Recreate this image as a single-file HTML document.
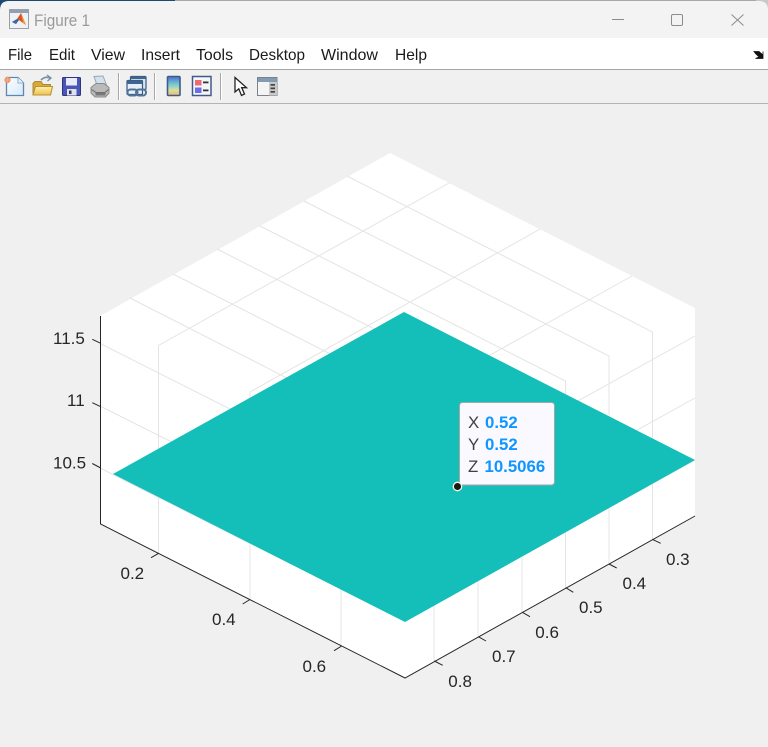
<!DOCTYPE html>
<html>
<head>
<meta charset="utf-8">
<title>Figure 1</title>
<style>
html,body{margin:0;padding:0;background:#f0f0f0;width:768px;height:747px;overflow:hidden}
svg{display:block;font-family:"Liberation Sans",Arial,sans-serif;filter:blur(.3px)}
</style>
</head>
<body>
<svg width="768" height="747" viewBox="0 0 768 747" xmlns="http://www.w3.org/2000/svg">
<defs>
<linearGradient id="cb" x1="0" y1="0" x2="0" y2="1"><stop offset="0" stop-color="#4f6fd0"/><stop offset=".4" stop-color="#74c8d4"/><stop offset=".72" stop-color="#d4e2a0"/><stop offset="1" stop-color="#f7b26c"/></linearGradient>
<linearGradient id="fold" x1="0" y1="0" x2="0" y2="1"><stop offset="0" stop-color="#fff0a8"/><stop offset="1" stop-color="#f0c050"/></linearGradient>
<linearGradient id="doc" x1="0" y1="0" x2="1" y2="1"><stop offset="0" stop-color="#ffffff"/><stop offset="1" stop-color="#d4e8fa"/></linearGradient>
</defs>

<!-- window backdrop -->
<rect width="768" height="747" fill="#f0f0f0"/>
<rect x="0" y="0" width="175" height="3" fill="#1f4a70"/>
<rect x="175" y="0" width="593" height="3" fill="#a8a8a8"/>
<rect x="0" y="0" width="9" height="9" fill="#1f4a70"/>
<rect x="756" y="0" width="12" height="10" fill="#c8c8c8"/>

<!-- title bar -->
<path d="M0 38V10Q0 1 9 1H759Q768 1 768 10V38Z" fill="#f3f3f3"/>
<rect x="9.500" y="9.500" width="19" height="19" fill="#eef1f5" stroke="#9aa0a8"/>
<rect x="10" y="10" width="18" height="3" fill="#8fa0b4"/>
<path d="M12 22L17 19L21 13L26 25L23 23L19 20L16 24Z" fill="#d9541e"/>
<path d="M12 22L17 19L19 20L16 24Z" fill="#2f6fb0"/>
<path d="M21 13L26 25L23 23Z" fill="#f09a28"/>
<text x="34" y="26" font-size="17" fill="#9a9a9a" textLength="56" lengthAdjust="spacingAndGlyphs">Figure 1</text>

<line x1="612" y1="19.500" x2="624" y2="19.500" stroke="#8c8c8c" stroke-width="1"/>
<rect x="671.500" y="14.500" width="11" height="11" rx="1.500" fill="none" stroke="#8c8c8c" stroke-width="1"/>
<path d="M731.500 14.500L743.500 25.500M743.500 14.500L731.500 25.500" stroke="#8c8c8c" stroke-width="1" fill="none"/>

<!-- menu bar -->
<rect x="0" y="38" width="768" height="31" fill="#ffffff"/>
<rect x="0" y="69" width="768" height="1" fill="#a6a6a6"/>
<g font-size="16" fill="#1a1a1a">
<text x="8" y="60" textLength="24" lengthAdjust="spacingAndGlyphs">File</text>
<text x="49" y="60" textLength="26" lengthAdjust="spacingAndGlyphs">Edit</text>
<text x="91" y="60" textLength="34" lengthAdjust="spacingAndGlyphs">View</text>
<text x="141" y="60" textLength="39" lengthAdjust="spacingAndGlyphs">Insert</text>
<text x="196" y="60" textLength="37" lengthAdjust="spacingAndGlyphs">Tools</text>
<text x="249" y="60" textLength="56" lengthAdjust="spacingAndGlyphs">Desktop</text>
<text x="321" y="60" textLength="57" lengthAdjust="spacingAndGlyphs">Window</text>
<text x="395" y="60" textLength="32" lengthAdjust="spacingAndGlyphs">Help</text>
</g>
<path d="M754 51.500L759 51.500L763 55V51.500V58.500H755.500L759 57L755.500 53.500Z" fill="#111" stroke="#111" stroke-width=".8"/>

<!-- toolbar -->
<rect x="0" y="70" width="768" height="33" fill="#f0f0f0"/>
<rect x="0" y="103" width="768" height="1" fill="#b4b4b4"/>
<g fill="#ffffff">
<rect x="118" y="73" width="1" height="27" fill="#a8a8a8"/><rect x="119" y="73" width="1" height="27"/>
<rect x="154" y="73" width="1" height="27" fill="#a8a8a8"/><rect x="155" y="73" width="1" height="27"/>
<rect x="220" y="73" width="1" height="27" fill="#a8a8a8"/><rect x="221" y="73" width="1" height="27"/>
</g>

<!-- new -->
<path d="M6.500 77.500H18L23.500 83V95.500H6.500Z" fill="url(#doc)" stroke="#5f86ae" stroke-width="1.300"/>
<path d="M18 77.500V83H23.500" fill="#eaf3fb" stroke="#8fb0cc"/>
<circle cx="7.500" cy="80" r="3" fill="#f0905e"/>
<path d="M4 80H11M7.500 76.500V83.500" stroke="#f3a886" stroke-width="1.200"/>

<!-- open -->
<path d="M33 83.500V95H50.500V84.500H43L41 81.500H35Z" fill="#d8a838" stroke="#a98a3a"/>
<path d="M33 95L35.500 86.500H52.500L50.500 95Z" fill="url(#fold)" stroke="#b89438" stroke-width="1.100"/>
<path d="M41 80Q45 76 50 78" fill="none" stroke="#7890a4" stroke-width="1.600"/>
<path d="M47 75L51 78L47.500 81" fill="none" stroke="#7890a4" stroke-width="1.400"/>

<!-- save -->
<rect x="62.500" y="77.500" width="18" height="18" rx="1" fill="#4a55b8" stroke="#2d3580"/>
<rect x="66" y="78" width="11" height="7.500" fill="#e8ecf8"/>
<rect x="67" y="89" width="9.500" height="6.500" fill="#dfe2ea"/>
<rect x="69" y="90.500" width="2.500" height="3.500" fill="#30365e"/>

<!-- print -->
<path d="M94 76.500L103 76L106.500 85H97Z" fill="#d4e2ee" stroke="#97a8b4"/>
<path d="M91 87.500L96 83.500H104L109 87.500V93L105.500 97H95L91 93Z" fill="#bababa" stroke="#8a8a8a"/>
<path d="M91.500 89.500L96 92.500H105L108.500 89.500" fill="none" stroke="#686868"/>
<rect x="95.500" y="92.500" width="10" height="3" fill="#787878"/>

<!-- link plot -->
<rect x="130.500" y="76.500" width="15.500" height="13" rx="1" fill="#dbe6f0" stroke="#36567e" stroke-width="1.200"/>
<rect x="127" y="80.500" width="15.500" height="14" rx="1" fill="#e8eff6" stroke="#36567e" stroke-width="1.200"/>
<rect x="127" y="80.500" width="15.500" height="3.500" fill="#3f6592"/>
<rect x="130.500" y="76.500" width="15.500" height="2.500" fill="#3f6592"/>
<rect x="127.500" y="89.500" width="10" height="6" rx="3" fill="none" stroke="#4f7498" stroke-width="2"/>
<rect x="136" y="89.500" width="10" height="6" rx="3" fill="none" stroke="#4f7498" stroke-width="2"/>

<!-- colorbar -->
<rect x="167.500" y="76.500" width="12.500" height="19" rx="1" fill="url(#cb)" stroke="#3f5c88" stroke-width="1.600"/>

<!-- legend -->
<rect x="192.500" y="76.500" width="18.500" height="19" fill="#f4f6fa" stroke="#3f5a88" stroke-width="1.500"/>
<rect x="195" y="80" width="6.500" height="5.500" fill="#ee6a70"/>
<rect x="195" y="87.500" width="6.500" height="5.500" fill="#6c6ce8"/>
<rect x="203" y="81.500" width="5.500" height="1.800" fill="#333"/>
<rect x="203" y="89.500" width="5.500" height="1.800" fill="#333"/>

<!-- cursor -->
<path d="M235 77.500V92L238.800 88.800L241.500 95.500L244.500 94L241.700 87.700H246.500Z" fill="#ffffff" stroke="#222" stroke-width="1.300"/>

<!-- panel -->
<rect x="257.500" y="77.500" width="19.500" height="18" fill="#f4f4f4" stroke="#7c8288"/>
<rect x="258" y="78" width="19" height="4" fill="#7f9cb4"/>
<rect x="269" y="82" width="8" height="13.500" fill="#c9c9c9"/>
<rect x="270.500" y="84" width="4.500" height="1.700" fill="#444"/>
<rect x="270.500" y="87.500" width="4.500" height="1.700" fill="#444"/>
<rect x="270.500" y="91" width="4.500" height="1.700" fill="#444"/>

<!-- plot background -->
<polygon points="100,316 390,153 695,308 695,516 405,678 100,524" fill="#ffffff"/>

<!-- grid -->
<g fill="none" stroke="#e4e4e4" stroke-width="1">
<path d="M158.500 553V345.500L449 183"/>
<path d="M250 599V392L540 229"/>
<path d="M341 645V438L632 276"/>
<path d="M652.500 539V332L347 176"/>
<path d="M609 564V356L304 201"/>
<path d="M565.500 588V381L260 226"/>
<path d="M522 612V404L217 249"/>
<path d="M478 637V429L173 274"/>
<path d="M434 661V453L130 298"/>
<path d="M100 343.500L405 497L695 336"/>
<path d="M100 406L405 559L695 398"/>
<path d="M100 468L405 621L695 460"/>
</g>

<!-- surface -->
<polygon points="113,474 404,312 695,460 405,622" fill="#14bfb9"/>

<!-- axes -->
<g fill="none" stroke="#262626" stroke-width="1">
<path d="M100.500 316V524L405 678L695 516"/>
<path d="M158.700 553.300L151 557.700M250 599.500L242.700 604M341.700 646L334 650.700"/>
<path d="M652.300 539.300L660.700 543.300M609 564L616.700 568M565.700 587.700L573.300 592.300M522.300 612.300L530 616.700M478.300 636.700L486 641M434.300 661L442.700 665.300"/>
<path d="M92.300 339.300L100.700 343.300M92.300 402.700L100.700 406.700M92.300 463.500L100.700 468"/>
</g>

<!-- tick labels -->
<g font-size="17" fill="#262626">
<text x="53" y="344">11.5</text>
<text x="67" y="406">11</text>
<text x="53" y="468.500">10.5</text>
<text x="120.500" y="579">0.2</text>
<text x="212" y="625">0.4</text>
<text x="302.500" y="672">0.6</text>
<text x="666" y="565">0.3</text>
<text x="622.500" y="589">0.4</text>
<text x="579" y="613">0.5</text>
<text x="535.300" y="638">0.6</text>
<text x="492" y="662">0.7</text>
<text x="448.300" y="687">0.8</text>
</g>

<!-- data tip -->
<rect x="459.500" y="402.500" width="95" height="82.500" rx="3" fill="#f9f9ff" stroke="#a6a6a6" stroke-width="1"/>
<g font-size="16.800">
<text x="468" y="428" fill="#404040">X</text>
<text x="485" y="428" fill="#0f96ff" font-weight="bold">0.52</text>
<text x="468" y="450" fill="#404040">Y</text>
<text x="485" y="450" fill="#0f96ff" font-weight="bold">0.52</text>
<text x="468" y="472" fill="#404040">Z</text>
<text x="484.500" y="472" fill="#0f96ff" font-weight="bold">10.5066</text>
</g>
<circle cx="457.500" cy="486.500" r="4.200" fill="#1a1a1a" stroke="#f9f5d8" stroke-width="1.300"/>
</svg>
</body>
</html>
